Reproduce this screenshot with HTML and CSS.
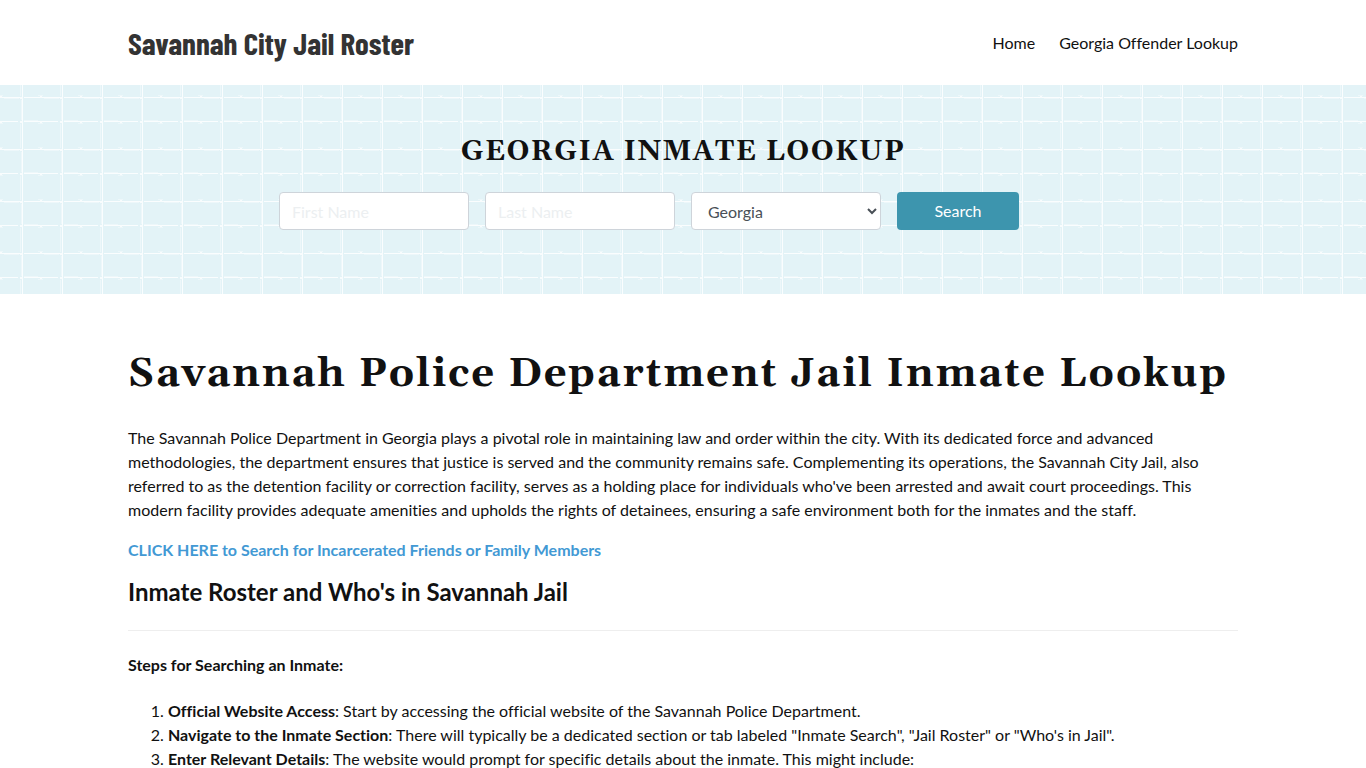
FILE: index.html
```html
<!DOCTYPE html>
<html lang="en">
<head>
  <meta charset="UTF-8">
  <meta name="viewport" content="width=device-width, initial-scale=1.0">
  <title>Savannah City Jail Roster</title>
  <link rel="stylesheet" href="styles.css">
</head>
<body>
  <header class="container site-header">
    <a class="logo" href="#">Savannah City Jail Roster</a>
    <nav class="menu">
      <a href="#">Home</a>
      <a href="#">Georgia Offender Lookup</a>
    </nav>
  </header>

  <section class="banner">
    <svg class="pattern" aria-hidden="true">
      <defs>
        <pattern id="tiles" width="40" height="52" patternUnits="userSpaceOnUse">
          <path class="tile-soft" d="M20.5 0V11M21.5 15V35M20.5 39V52M0 10.5H3M38 10.5H40M0 38.5H3M38 38.5H40M4 13.5H19M24 35.5H38" />
          <path class="tile-line" d="M22.5 0V52M0 12.5H20M24 12.5H40M0 36.5H18M24 36.5H40" />
          <path class="tile-dot" d="M20 12h3v2h-3zM20 36h3v2h-3zM0 11h2v2h-2zM0 36h2v2h-2z" />
        </pattern>
      </defs>
      <rect width="100%" height="100%" fill="url(#tiles)" />
    </svg>
    <div class="lookup">
      <h2 class="lookup-title">Georgia Inmate Lookup</h2>
      <form class="lookup-form">
        <input class="field" type="text" placeholder="First Name" aria-label="First Name">
        <input class="field" type="text" placeholder="Last Name" aria-label="Last Name">
        <select class="field" aria-label="State">
          <option>Georgia</option>
        </select>
        <button class="search-btn" type="submit">Search</button>
      </form>
    </div>
  </section>

  <main class="container content">
    <h1>Savannah Police Department Jail Inmate Lookup</h1>
    <p>The Savannah Police Department in Georgia plays a pivotal role in maintaining law and order within the city. With its dedicated force and advanced methodologies, the department ensures that justice is served and the community remains safe. Complementing its operations, the Savannah City Jail, also referred to as the detention facility or correction facility, serves as a holding place for individuals who've been arrested and await court proceedings. This modern facility provides adequate amenities and upholds the rights of detainees, ensuring a safe environment both for the inmates and the staff.</p>
    <p><a class="cta" href="#">CLICK HERE to Search for Incarcerated Friends or Family Members</a></p>
    <h2 class="section-title">Inmate Roster and Who's in Savannah Jail</h2>
    <hr>
    <p class="steps-title"><strong>Steps for Searching an Inmate:</strong></p>
    <ol>
      <li><strong>Official Website Access</strong>: Start by accessing the official website of the Savannah Police Department.</li>
      <li><strong>Navigate to the Inmate Section</strong>: There will typically be a dedicated section or tab labeled "Inmate Search", "Jail Roster" or "Who's in Jail".</li>
      <li><strong>Enter Relevant Details</strong>: The website would prompt for specific details about the inmate. This might include:</li>
    </ol>
  </main>
</body>
</html>
```
FILE: styles.css
```css
* {
  box-sizing: border-box;
}

body {
  margin: 0;
  font-family: Lato, "Liberation Sans", sans-serif;
  font-size: 16px;
  line-height: 24px;
  font-variant-ligatures: none;
  color: #111;
  background-color: #fff;
  overflow: hidden;
}

.container {
  max-width: 1140px;
  margin: 0 auto;
  padding: 0 15px;
}

/* header */
.site-header {
  display: flex;
  justify-content: space-between;
  align-items: center;
  min-height: 85px;
}

.logo {
  font-family: "Barlow Condensed", "Liberation Sans Narrow", "Liberation Sans", sans-serif;
  font-size: 31px;
  font-weight: 700;
  line-height: 36px;
  color: #333;
  text-decoration: none;
}

.menu {
  display: flex;
  gap: 24px;
}

.menu a {
  color: #111;
  text-decoration: none;
}

/* banner */
.banner {
  position: relative;
  padding: 50px 15px 64px;
  background-color: #e3f3f7;
}

.pattern {
  position: absolute;
  top: 0;
  left: 0;
  width: 100%;
  height: 100%;
}

.tile-line {
  fill: none;
  stroke: #fafdfe;
  stroke-width: 1;
}

.tile-soft {
  fill: none;
  stroke: #edf7fa;
  stroke-width: 1;
}

.tile-dot {
  fill: #f8fcfd;
}

.lookup {
  position: relative;
  max-width: 808px;
  margin: 0 auto;
}

.lookup-title {
  margin: 0 0 22px;
  font-family: Georgia, Gelasio, "Liberation Serif", serif;
  font-size: 28px;
  line-height: 35px;
  letter-spacing: 0.05em;
  text-align: center;
  text-transform: uppercase;
}

.lookup-form {
  display: grid;
  grid-template-columns: repeat(4, 1fr);
  gap: 16px;
}

.field {
  width: 100%;
  height: 38px;
  padding: 6px 12px;
  border: 1px solid #ced4da;
  border-radius: 4px;
  background-color: #fff;
  font: inherit;
  color: #495057;
}

.field::placeholder {
  color: #eceff1;
}

.search-btn {
  justify-self: start;
  min-width: 122px;
  height: 38px;
  padding: 0 36px;
  border: none;
  border-radius: 4px;
  background-color: #3d95ae;
  font: inherit;
  color: #fff;
  cursor: pointer;
}

/* content */
.content {
  padding-top: 51px;
}

h1 {
  margin: 0 0 21px;
  font-family: Georgia, Gelasio, "Liberation Serif", serif;
  font-size: 40px;
  line-height: 60px;
  letter-spacing: 0.05em;
}

p {
  margin: 0 0 16px;
}

strong {
  font-weight: 700;
}

.cta {
  font-weight: 700;
  color: #4299d4;
  text-decoration: none;
}

.section-title {
  margin: 0;
  font-size: 24px;
  font-weight: 700;
  line-height: 28px;
}

hr {
  margin: 24px 0 22px;
  border: 0;
  border-top: 1px solid #eee;
}

.steps-title {
  margin-bottom: 22px;
}

ol {
  margin: 0 0 16px;
  padding-left: 40px;
}
```
